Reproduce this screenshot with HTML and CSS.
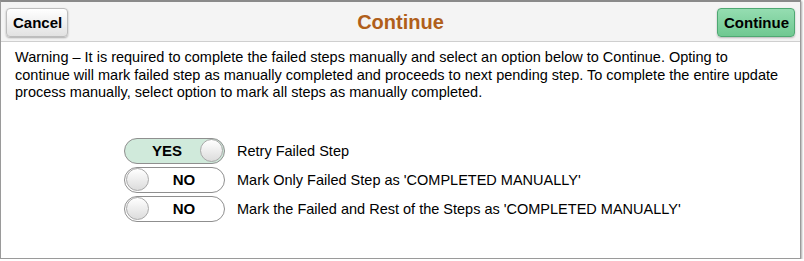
FILE: index.html
```html
<!DOCTYPE html>
<html>
<head>
<meta charset="utf-8">
<link rel="stylesheet" href="styles.css">
</head>
<body>
<div class="dialog">
  <div class="header">
    <button class="btn btn-cancel">Cancel</button>
    <div class="title">Continue</div>
    <button class="btn btn-primary">Continue</button>
  </div>
  <div class="content">
    <p class="warning">Warning – It is required to complete the failed steps manually and select an option below to Continue. Opting to continue will mark failed step as manually completed and proceeds to next pending step. To complete the entire update process manually, select option to mark all steps as manually completed.</p>
    <div class="options">
      <div class="option">
        <div class="toggle on"><span class="toggle-text">YES</span><span class="knob"></span></div>
        <span class="option-label">Retry Failed Step</span>
      </div>
      <div class="option">
        <div class="toggle off"><span class="knob"></span><span class="toggle-text">NO</span></div>
        <span class="option-label">Mark Only Failed Step as 'COMPLETED MANUALLY'</span>
      </div>
      <div class="option">
        <div class="toggle off"><span class="knob"></span><span class="toggle-text">NO</span></div>
        <span class="option-label">Mark the Failed and Rest of the Steps as 'COMPLETED MANUALLY'</span>
      </div>
    </div>
  </div>
</div>
</body>
</html>
```

FILE: styles.css
```css
html, body {
  margin: 0;
  padding: 0;
  background: #ffffff;
}
body {
  font-family: "Liberation Sans", Arial, sans-serif;
  color: #000;
}
.dialog {
  box-sizing: border-box;
  width: 801px;
  height: 259px;
  border: 1px solid #9a9a9a;
  border-top: 2px solid #8a8a8a;
  box-shadow: 1px 1px 2px rgba(0,0,0,0.35);
  background: #fff;
}
.header {
  box-sizing: border-box;
  height: 40px;
  background: #f4f4f4;
  border-bottom: 1px solid #cfcfcf;
  display: grid;
  grid-template-columns: 1fr auto 1fr;
  align-items: center;
  padding: 0 5px 0 5px;
}
.btn {
  font-family: "Liberation Sans", Arial, sans-serif;
  font-weight: bold;
  font-size: 15px;
  height: 29px;
  border-radius: 4px;
  padding: 0 6px;
  color: #000;
  cursor: pointer;
  margin-top: 1px;
}
.btn-cancel {
  justify-self: start;
  width: 62px;
  background: linear-gradient(#ffffff, #e2e2e2);
  border: 1px solid #bdbdbd;
  box-shadow: 0 1px 2px rgba(0,0,0,0.3);
}
.btn-primary {
  justify-self: end;
  width: 78px;
  background: linear-gradient(#95ddb1, #6fc891);
  border: 1px solid #4ea872;
  box-shadow: 0 1px 2px rgba(0,0,0,0.25);
}
.title {
  font-size: 20px;
  font-weight: bold;
  color: #b05f1b;
  padding-top: 1px;
}
.content {
  padding: 7px 14px 0 14px;
}
.warning {
  margin: 0;
  font-size: 14.5px;
  line-height: 17.5px;
}
.options {
  margin-top: 36px;
  padding-left: 109px;
  display: flex;
  flex-direction: column;
  gap: 3px;
}
.option {
  display: flex;
  align-items: center;
  gap: 12px;
}
.toggle {
  box-sizing: border-box;
  width: 101px;
  height: 26px;
  border: 1px solid #8f8f8f;
  border-radius: 13px;
  display: flex;
  align-items: center;
  padding: 0 1px;
}
.toggle.on {
  background: #d0eadb;
}
.toggle.off {
  background: #ffffff;
}
.toggle-text {
  flex: 1;
  text-align: center;
  font-size: 15px;
  font-weight: bold;
  color: #000;
}
.toggle.on .toggle-text {
  padding-left: 8px;
}
.toggle.off .toggle-text {
  padding-right: 4px;
}
.knob {
  box-sizing: border-box;
  width: 23px;
  height: 23px;
  border-radius: 50%;
  border: 1px solid #a8a8a8;
  background: linear-gradient(#ffffff, #dcdcdc);
}
.option-label {
  font-size: 14.5px;
  color: #000;
}
```
